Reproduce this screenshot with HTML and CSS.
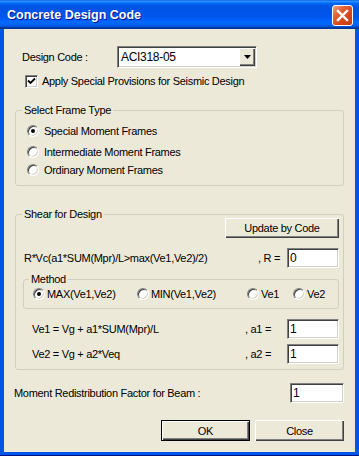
FILE: index.html
```html
<!DOCTYPE html>
<html lang="en">
    <head>
        <meta charset="UTF-8">
        <meta name="viewport" content="width=device-width, initial-scale=1.0">
        <title>Concrete Design Code</title>
        <link rel="stylesheet" href="styles.css">
    </head>
<body>

    <div class="window">
        <div class="titlebar">
            <span class="title">Concrete Design Code</span>
            <span class="close-btn">
                <svg width="19" height="19" viewBox="0 0 19 19">
                    <path d="M5 5 L14 14 M14 5 L5 14" stroke="#fff" stroke-width="2.4" stroke-linecap="square"/>
                </svg>
            </span>
        </div>

        <div class="client">
            <div class="code-row">
                <span class="code-label">Design Code :</span>
                <div class="select">
                    <span class="select-value">ACI318-05</span>
                    <span class="select-arrow">
                        <svg width="7" height="4" viewBox="0 0 7 4"><path d="M0 0 H7 L3.5 4 Z" fill="#000"/></svg>
                    </span>
                </div>
            </div>

            <div class="check-row">
                <span class="checkbox">
                    <svg width="9" height="9" viewBox="0 0 9 9"><path d="M1 3.5 L3.5 6 L8 1.5" stroke="#000" stroke-width="1.8" fill="none"/></svg>
                </span>
                <span>Apply Special Provisions for Seismic Design</span>
            </div>

            <fieldset class="group frame-group">
                <legend>Select Frame Type</legend>
                <div class="radio-row"><span class="radio checked"></span>Special Moment Frames</div>
                <div class="radio-row second"><span class="radio"></span>Intermediate Moment Frames</div>
                <div class="radio-row third"><span class="radio"></span>Ordinary Moment Frames</div>
            </fieldset>

            <fieldset class="group shear-group">
                <legend>Shear for Design</legend>
                <div class="update-row">
                    <button class="btn update-btn">Update by Code</button>
                </div>
                <div class="formula-row r-row">
                    <span class="formula">R*Vc(a1*SUM(Mpr)/L&gt;max(Ve1,Ve2)/2)</span>
                    <span class="eq r-eq">, R =</span>
                    <input class="field" type="text" value="0" readonly>
                </div>

                <fieldset class="group method-group">
                    <legend>Method</legend>
                    <div class="method-options">
                        <div class="option opt-max"><span class="radio checked"></span>MAX(Ve1,Ve2)</div>
                        <div class="option opt-min"><span class="radio"></span>MIN(Ve1,Ve2)</div>
                        <div class="option opt-ve1"><span class="radio"></span>Ve1</div>
                        <div class="option"><span class="radio"></span>Ve2</div>
                    </div>
                </fieldset>

                <div class="formula-row ve-row">
                    <span class="formula">Ve1 = Vg + a1*SUM(Mpr)/L</span>
                    <span class="eq">, a1 =</span>
                    <input class="field" type="text" value="1" readonly>
                </div>
                <div class="formula-row ve-row second-ve">
                    <span class="formula">Ve2 = Vg + a2*Veq</span>
                    <span class="eq">, a2 =</span>
                    <input class="field" type="text" value="1" readonly>
                </div>
            </fieldset>

            <div class="moment-row">
                <span class="moment-label">Moment Redistribution Factor for Beam :</span>
                <input class="field moment-field" type="text" value="1" readonly>
            </div>

            <div class="button-row">
                <button class="btn default-btn">OK</button>
                <button class="btn">Close</button>
            </div>
        </div>
    </div>

</body>
</html>
```

FILE: styles.css
```css
body {
    margin: 0;
    padding: 0;
    background-color: #ece9d8;
    font-family: "Liberation Sans", Arial, sans-serif;
    font-size: 11px;
    letter-spacing: -0.3px;
    color: #000;
}

.window {
    width: 359px;
    height: 456px;
    display: flex;
    flex-direction: column;
    background-color: #0055e6;
    box-sizing: border-box;
    border-bottom: 1px solid #00138c;
}

.titlebar {
    height: 29px;
    flex-shrink: 0;
    display: flex;
    align-items: center;
    justify-content: space-between;
    padding: 0 6px 0 7px;
    background: linear-gradient(to bottom, #0058ee 0%, #3593ff 4%, #288eff 6%, #127dff 8%, #036ffc 10%, #0262ee 14%, #0057e5 20%, #0054e3 24%, #0055eb 56%, #005bf5 66%, #026afe 76%, #0062ef 86%, #0052d6 92%, #0040ab 94%, #003092 100%);
}

.title {
    color: #fff;
    font-size: 12.5px;
    font-weight: bold;
    letter-spacing: 0;
    text-shadow: 1px 1px #0f1089;
    padding-top: 1px;
}

.close-btn {
    width: 19px;
    height: 19px;
    border: 1px solid #fff;
    border-radius: 3px;
    background: linear-gradient(135deg, #f2a48a 0%, #e5643e 30%, #d9481e 60%, #c23a12 100%);
    display: flex;
    margin-top: 1px;
}

.client {
    flex: 1;
    margin: 0 4px 3px 4px;
    background-color: #ece9d8;
    padding-top: 17px;
    display: flex;
    flex-direction: column;
}

/* design code */
.code-row {
    display: flex;
    align-items: center;
    padding-left: 18px;
    height: 22px;
}

.code-label {
    width: 95px;
}

.select {
    width: 140px;
    height: 22px;
    box-sizing: border-box;
    background: #fff;
    border: 1px solid;
    border-color: #808080 #fff #fff #808080;
    box-shadow: inset 1px 1px #404040, inset -1px -1px #d4d0c8;
    display: flex;
    align-items: center;
    padding: 1px;
}

.select-value {
    flex: 1;
    padding-left: 2px;
    font-size: 12px;
}

.select-arrow {
    width: 16px;
    height: 18px;
    box-sizing: border-box;
    background: #ece9d8;
    box-shadow: inset 1px 1px #fff, inset -1px -1px #404040, inset -2px -2px #808080;
    display: flex;
    align-items: center;
    justify-content: center;
}

.check-row {
    display: flex;
    align-items: center;
    height: 16px;
    margin-top: 5px;
    padding-left: 21px;
    gap: 4px;
}

.checkbox {
    width: 13px;
    height: 13px;
    box-sizing: border-box;
    background: #fff;
    border: 1px solid;
    border-color: #808080 #fff #fff #808080;
    box-shadow: inset 1px 1px #404040, inset -1px -1px #d4d0c8;
    display: flex;
    align-items: center;
    justify-content: center;
}

/* group boxes */
.group {
    margin: 0;
    border: 1px solid #d0d0bf;
    border-radius: 3px;
    min-width: 0;
}

.group legend {
    padding: 0 2px;
    line-height: 10px;
}

.frame-group {
    margin: 16px 11px 0 11px;
    padding: 8px 6px 7px 11px;
}

.frame-group legend {
    margin-left: -5px;
}

.radio-row {
    display: flex;
    align-items: center;
    height: 16px;
    gap: 5px;
}

.radio-row.second {
    margin-top: 5px;
}

.radio-row.third {
    margin-top: 2px;
}

.radio {
    width: 12px;
    height: 12px;
    box-sizing: border-box;
    border-radius: 50%;
    background: #fff;
    border: 1px solid;
    border-color: #808080 #fff #fff #808080;
    box-shadow: inset 1px 1px #404040, inset -1px -1px #d4d0c8;
    display: flex;
    align-items: center;
    justify-content: center;
    flex-shrink: 0;
}

.radio.checked::after {
    content: "";
    width: 4px;
    height: 4px;
    border-radius: 50%;
    background: #000;
}

.shear-group {
    margin: 23px 11px 0 11px;
    padding: 0 4px 5px 7px;
}

.shear-group > legend {
    margin-left: -1px;
}

.update-row {
    display: flex;
    justify-content: flex-end;
    margin-top: -1px;
}

.btn {
    font-family: "Liberation Sans", Arial, sans-serif;
    font-size: 11px;
    font-weight: normal;
    letter-spacing: -0.3px;
    color: #000;
    background: #ece9d8;
    border: none;
    padding: 0;
    height: 20px;
    box-shadow: inset 1px 1px #fff, inset -1px -1px #404040, inset -2px -2px #808080;
}

.update-btn {
    width: 114px;
}

.formula-row {
    display: flex;
    align-items: center;
    height: 20px;
}

.r-row {
    margin-top: 10px;
}

.formula {
    flex: 1;
    margin-left: 1px;
}

.eq {
    width: 42px;
}

.r-eq {
    width: 29px;
}

.field {
    width: 52px;
    height: 20px;
    box-sizing: border-box;
    background: #fff;
    border: 1px solid;
    border-color: #808080 #fff #fff #808080;
    box-shadow: inset 1px 1px #404040, inset -1px -1px #d4d0c8;
    font-family: "Liberation Sans", Arial, sans-serif;
    font-size: 12px;
    padding: 0 0 0 2px;
    outline: none;
    color: #000;
}

.method-group {
    margin: 6px 0 0 0;
    padding: 2px 3px 6px 9px;
}

.method-group legend {
    margin-left: -4px;
}

.method-options {
    display: flex;
    align-items: center;
    height: 16px;
}

.option {
    display: flex;
    align-items: center;
    gap: 2px;
}

.opt-max {
    width: 104px;
}

.opt-min {
    width: 110px;
}

.opt-ve1 {
    width: 46px;
}

.ve-row {
    margin-top: 10px;
}

.ve-row .formula {
    margin-left: 9px;
}

.ve-row.second-ve {
    margin-top: 5px;
}

.moment-row {
    display: flex;
    align-items: center;
    height: 20px;
    margin: 13px 11px 0 0;
    padding-left: 10px;
}

.moment-label {
    flex: 1;
}

.moment-field {
    width: 54px;
}

.button-row {
    display: flex;
    justify-content: flex-end;
    gap: 5px;
    margin: 17px 11px 0 0;
}

.button-row .btn {
    width: 89px;
    height: 21px;
}

.default-btn {
    box-shadow: inset 0 0 0 1px #000, inset 2px 2px #fff, inset -2px -2px #404040, inset -3px -3px #808080;
}
```
